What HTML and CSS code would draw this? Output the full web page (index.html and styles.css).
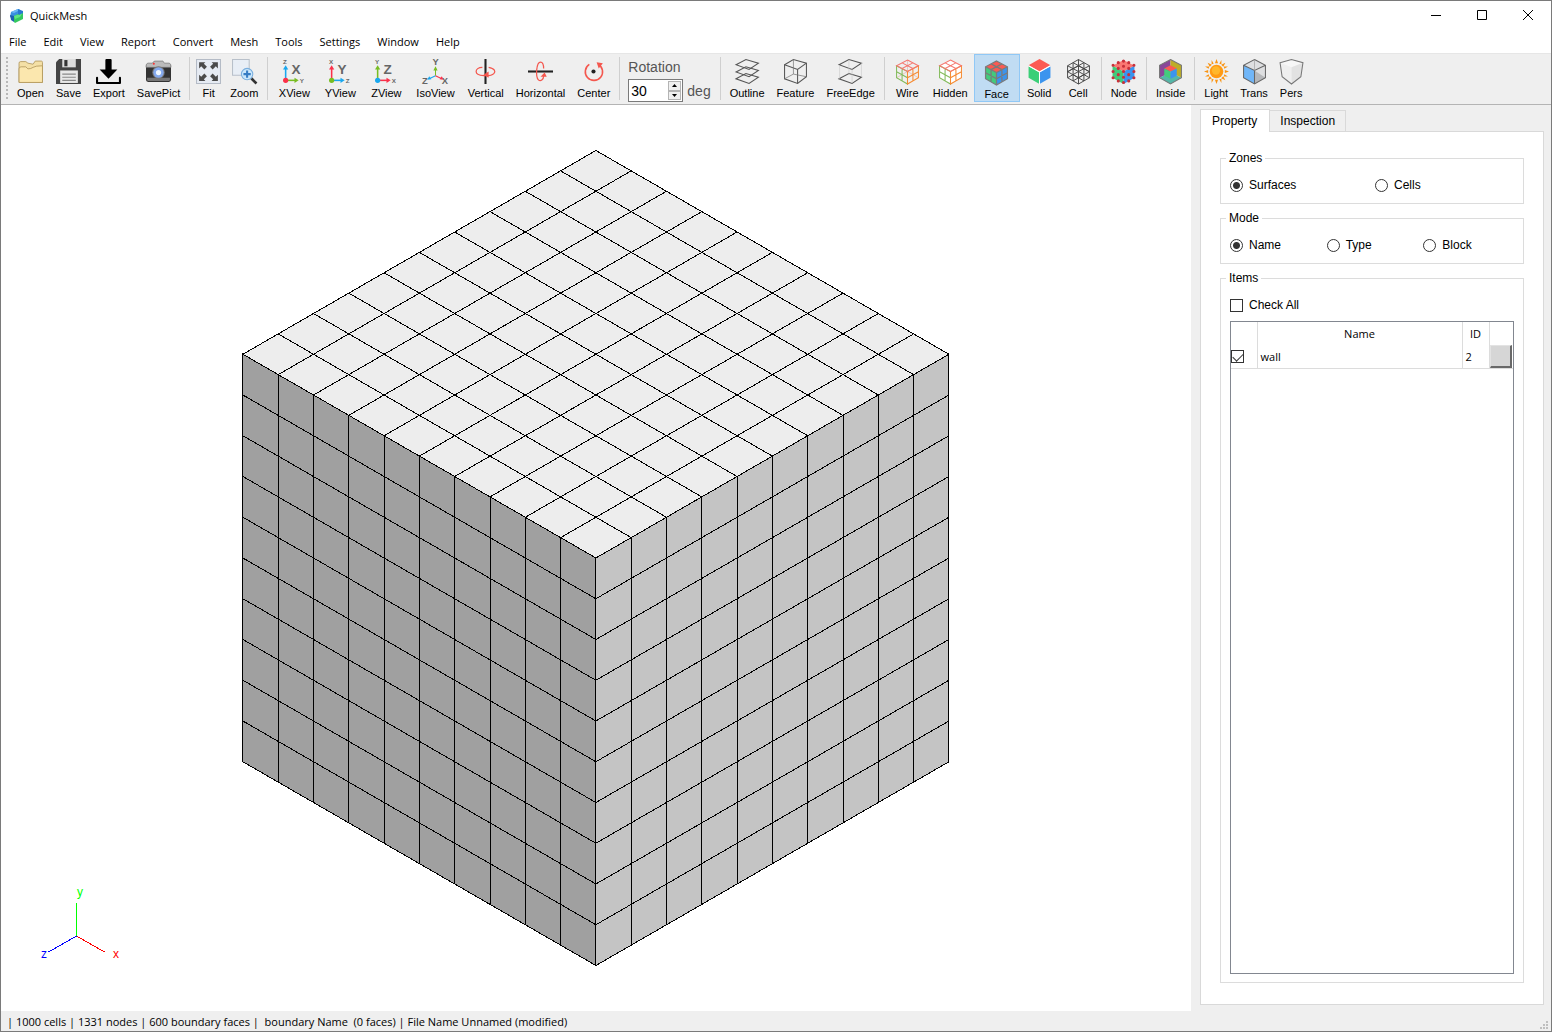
FILE: index.html
```html
<!DOCTYPE html>
<html lang="en">
<head>
  <meta charset="UTF-8">
  <meta name="viewport" content="width=device-width, initial-scale=1.0">
  <title>QuickMesh</title>
  <link rel="stylesheet" href="styles.css">
</head>
<body>
  <div class="window">
    <header class="titlebar">
      <svg class="logo" width="16" height="16" viewBox="0 0 16 16">
        <path d="M2 4l7-3 2 1v4l-7 4-3-1z" fill="#3a8fe0"/>
        <path d="M2 4l7-3 2 1-6 3z" fill="#6db8f5"/>
        <path d="M1 7l4 1v6l-3-2z" fill="#1d5fb0"/>
        <path d="M5 8l6-3 3-1v7l-8 4-1-1z" fill="#35c860"/>
        <path d="M5 8l6-2 3-2-3 5-5 2z" fill="#5fe583"/>
        <path d="M9 1l5 2v2l-4 2-1-1z" fill="#2678cf"/>
      </svg>
      <h1>QuickMesh</h1>
      <div class="controls">
        <button aria-label="Minimize"><svg width="12" height="12"><path d="M1 5.500h10" stroke="#000"/></svg></button>
        <button aria-label="Maximize"><svg width="12" height="12"><path d="M1.500 .500h9v9h-9z" fill="none" stroke="#000"/></svg></button>
        <button aria-label="Close"><svg width="12" height="12"><path d="M1 0l10 10M11 0L1 10" stroke="#000"/></svg></button>
      </div>
    </header>

    <nav class="menu">
      <button>File</button>
      <button>Edit</button>
      <button>View</button>
      <button>Report</button>
      <button>Convert</button>
      <button>Mesh</button>
      <button>Tools</button>
      <button>Settings</button>
      <button>Window</button>
      <button>Help</button>
    </nav>

    <div class="toolbar">
      <span class="grip"></span>

      <button class="tool">
        <svg viewBox="0 0 24 24"><path d="M1 22.500V4q0-1.500 1.500-1.500h5l2 1.500 5 1 2-3h6q1 0 1 1.500v19z" fill="#f4e0a6" stroke="#b1965a" stroke-width=".8"/><path d="M1 22.500V9.500q0-2 2-2h4.500l2 2q3 0 5-1.500t9-1.500v16z" fill="#fbe7ae" stroke="#b1965a" stroke-width=".8"/></svg>
        Open
      </button>
      <button class="tool">
        <svg viewBox="0 0 24 24"><path d="M3 0h21v24H0V3z" fill="#444"/><path d="M6 0h13v8H6z" fill="#ddd"/><path d="M8 1h3v6H8z" fill="#333"/><path d="M4 11h17v12H4z" fill="#e8e8e8"/><path d="M6 14.500h13M6 17.500h13M6 20.500h13" stroke="#888"/></svg>
        Save
      </button>
      <button class="tool">
        <svg viewBox="0 0 24 24"><path d="M9 1q0-1 1-1h4q1 0 1 1v9h5.500L12 19 3.500 10H9z"/><path d="M1 18v5h22v-5" fill="none" stroke="#000" stroke-width="2" stroke-linejoin="round" stroke-linecap="round"/></svg>
        Export
      </button>
      <button class="tool">
        <svg viewBox="0 0 24 24"><path d="M2 5h4l2-3h8l2 3h4q2 0 2 2v13q0 2-2 2H2q-2 0-2-2V7q0-2 2-2z" fill="#333"/><path d="M2 4h4l2-2h8l2 2h4q2 0 2 4H0q0-4 2-4z" fill="#bbb" stroke="#777" stroke-width=".7"/><path d="M1 18h22v2q0 1-1 1H2q-1 0-1-1z" fill="#777"/><circle cx="12" cy="13" r="6" fill="#777"/><circle cx="12" cy="13" r="5" fill="#84a9ed"/><circle cx="12" cy="13" r="2.500" fill="#eef6ff"/><circle cx="7.500" cy="4.500" r="1" fill="#f33"/></svg>
        SavePict
      </button>
      <span class="sep"></span>

      <button class="tool">
        <svg viewBox="0 0 24 24"><path d="M.5.500h23v23H.5z" fill="#e6ebf3" stroke="#b4bbc6"/><path d="M3 3h6L7.500 4.500l3 3-2.500 2.500-3-3L3 9zM21 3h-6l1.500 1.500-3 3L16 10l3-3 2 2zM3 21h6l-1.500-1.500 3-3L8 14l-3 3-2-2zM21 21h-6l1.500-1.500-3-3L16 14l3 3 2-2z" fill="#4a4a4a"/></svg>
        Fit
      </button>
      <button class="tool">
        <svg viewBox="0 0 24 24"><path d="M.5.500h16v15H.5z" fill="#e8eef6" stroke="#b8c0ca"/><path d="M18.500 18.500l5 5" stroke="#333" stroke-width="2.500"/><circle cx="14.500" cy="14.500" r="5.500" fill="#cbe7fb" stroke="#79aede"/><path d="M14.500 11v7M11 14.500h7" stroke="#377dc4" stroke-width="2"/></svg>
        Zoom
      </button>
      <span class="sep"></span>

      <button class="tool view">
        <svg viewBox="0 0 24 24"><path d="M3.500 20V9" stroke="#19a7ee" stroke-width="1.500"/><path d="M1 10l2.500-4L6 10z" fill="#19a7ee"/><path d="M4 20.500h9" stroke="#78bd22" stroke-width="1.500"/><path d="M12 18l4 2.500-4 2.500z" fill="#78bd22"/><circle cx="3.500" cy="20.500" r="2.500" fill="#fb3049"/><text x="1" y="5" class="axis-sm">Z</text><text x="17" y="23" class="axis-sm">Y</text><text x="9" y="14" class="axis-lg">X</text></svg>
        XView
      </button>
      <button class="tool view">
        <svg viewBox="0 0 24 24"><path d="M3.500 20V9" stroke="#fb3049" stroke-width="1.500"/><path d="M1 10l2.500-4L6 10z" fill="#fb3049"/><path d="M4 20.500h9" stroke="#19a7ee" stroke-width="1.500"/><path d="M12 18l4 2.500-4 2.500z" fill="#19a7ee"/><circle cx="3.500" cy="20.500" r="2.500" fill="#78bd22"/><text x="1" y="5" class="axis-sm">X</text><text x="17" y="23" class="axis-sm">Z</text><text x="9" y="14" class="axis-lg">Y</text></svg>
        YView
      </button>
      <button class="tool view">
        <svg viewBox="0 0 24 24"><path d="M3.500 20V9" stroke="#78bd22" stroke-width="1.500"/><path d="M1 10l2.500-4L6 10z" fill="#78bd22"/><path d="M4 20.500h9" stroke="#fb3049" stroke-width="1.500"/><path d="M12 18l4 2.500-4 2.500z" fill="#fb3049"/><circle cx="3.500" cy="20.500" r="2.500" fill="#19a7ee"/><text x="1" y="5" class="axis-sm">Y</text><text x="17" y="23" class="axis-sm">X</text><text x="9" y="14" class="axis-lg">Z</text></svg>
        ZView
      </button>
      <button class="tool view">
        <svg viewBox="0 0 24 24"><path d="M12 16V9" stroke="#78bd22"/><path d="M10 11l2-4 2 4z" fill="#78bd22"/><path d="M12 16l-6 3" stroke="#19a7ee"/><path d="M4 20l2-3.500 2 3z" fill="#19a7ee"/><path d="M12 16l6 3" stroke="#fb3049"/><path d="M20 20l-2-3.500-2 3z" fill="#fb3049"/><text x="9" y="6" class="axis-md">Y</text><text x="-1" y="24" class="axis-md">Z</text><text x="18" y="24" class="axis-md">X</text></svg>
        IsoView
      </button>
      <button class="tool">
        <svg viewBox="0 0 24 24"><path d="M12 0v24" stroke="#222" stroke-width="2"/><path d="M9 8c-4 0-6 2-6 4 0 5 14 5 17 2 2-2 1-5-5-6" fill="none" stroke="#f4574e" stroke-width="1.200"/><path d="M15 12v6l-5-3z" fill="#f4574e"/></svg>
        Vertical
      </button>
      <button class="tool">
        <svg viewBox="0 0 24 24"><path d="M0 12h24" stroke="#222" stroke-width="2"/><path d="M15 9c0-4-1-6-3-6-4 0-5 14-2 17 2 2 5 0 5-4" fill="none" stroke="#f4574e" stroke-width="1.200"/><path d="M12 17h6l-2-4z" fill="#f4574e"/></svg>
        Horizontal
      </button>
      <button class="tool">
        <svg viewBox="0 0 24 24"><path d="M16.500 5A8.300 8.300 0 1 1 8 5.200" fill="none" stroke="#f4574e" stroke-width="1.500"/><path d="M15 3l6 1-4 5z" fill="#f4574e"/><circle cx="12" cy="12" r="2" fill="#222"/></svg>
        Center
      </button>
      <span class="sep"></span>

      <div class="rotation">
        <label for="rotation">Rotation</label>
        <div class="rotation-row">
          <div class="spin">
            <input type="text" id="rotation" value="30">
            <div class="spin-buttons">
              <button aria-label="Increase"><svg width="5" height="3"><path d="M0 3l2.500-3L5 3z"/></svg></button>
              <button aria-label="Decrease"><svg width="5" height="3"><path d="M0 0l2.500 3L5 0z"/></svg></button>
            </div>
          </div>
          <span>deg</span>
        </div>
      </div>
      <span class="sep"></span>

      <button class="tool">
        <svg viewBox="0 0 24 24"><g fill="none" stroke="#555"><path d="M1 5.500l9.500-5L22.500 4 13.500 10z"/><path d="M1 12.500l9.500-5L22.500 11 13.500 17z"/><path d="M1 19l9.500-5 12 3.500-9 6z"/></g></svg>
        Outline
      </button>
      <button class="tool">
        <svg viewBox="0 0 24 24"><g fill="none" stroke="#555"><path d="M1.500 5.500L10 .500l12.500 3.500v13L14 23.500 1.500 19z"/><path d="M1.500 5.500L14 10l8.500-6M14 10v13.500"/><path d="M10 .500v14L1.500 19M10 14.500l12.500 2.500" stroke="#777" stroke-width=".7"/></g></svg>
        Feature
      </button>
      <button class="tool">
        <svg viewBox="0 0 24 24"><g fill="none" stroke="#555"><path d="M1 5.500l9.500-5L22.500 4 13.500 10z"/><path d="M1 19l9.500-5 12 3.500-9 6z"/><path d="M1.500 6v13M22.500 4v13M13.500 10v13M10.500 1v13" stroke="#ccc" stroke-width=".6"/></g></svg>
        FreeEdge
      </button>
      <span class="sep"></span>

      <button class="tool toggle">
        <svg viewBox="0 0 24 24"><g fill="none"><path d="M12 12V1M12 12l10.500 6M12 12l-10.500 6" stroke="#e5b6ac" stroke-width=".7"/><path d="M1.500 6.500L12 12v12L1.500 18zM6.800 9.200V21M1.500 12.200L12 18" stroke="#83bb5b"/><path d="M22.500 6.500L12 12v12l10.500-6zM17.200 9.200V21M22.500 12.200L12 18" stroke="#f68b32"/><path d="M12 1l10.500 5.500L12 12 1.500 6.500zM17.200 3.700L6.800 9.200M6.800 3.700l10.400 5.500" stroke="#f5776f"/></g></svg>
        Wire
      </button>
      <button class="tool">
        <svg viewBox="0 0 24 24"><path d="M12 1l10.500 5.500V18L12 24 1.500 18V6.500z" fill="#fff"/><g fill="none"><path d="M1.500 6.500L12 12v12L1.500 18zM6.800 9.200V21M1.500 12.200L12 18" stroke="#83bb5b"/><path d="M22.500 6.500L12 12v12l10.500-6zM17.200 9.200V21M22.500 12.200L12 18" stroke="#f68b32"/><path d="M12 1l10.500 5.500L12 12 1.500 6.500zM17.200 3.700L6.800 9.200M6.800 3.700l10.400 5.500" stroke="#f5776f"/></g></svg>
        Hidden
      </button>
      <button class="tool active" aria-pressed="true">
        <svg viewBox="0 0 24 24"><path d="M12 1l10.500 5.500L12 12 1.500 6.500z" fill="#fc5a53"/><path d="M1.500 6.500L12 12v12L1.500 18z" fill="#43cb7c"/><path d="M22.500 6.500L12 12v12l10.500-6z" fill="#3b94ee"/><path d="M12 1l10.500 5.500V18L12 24 1.500 18V6.500zM1.500 6.500L12 12l10.500-5.500M12 12v12M6.800 9.200V21M1.500 12.200L12 18l10.500-5.800M17.200 9.200V21M17.200 3.700L6.800 9.200M6.800 3.700l10.400 5.500" fill="none" stroke="#7b7b7b" stroke-width="1.200"/></svg>
        Face
      </button>
      <button class="tool toggle">
        <svg viewBox="0 0 24 24"><path d="M12 0l10.500 6L12 12 1.500 6z" fill="#fc5a53"/><path d="M1.500 7L12 13v11L1.500 18z" fill="#3bcf77"/><path d="M22.500 7L12 13v11l10.500-6z" fill="#3b94ee"/><path d="M1.500 6.500L12 12.500l10.500-6M12 12.500V24" fill="none" stroke="#fff"/></svg>
        Solid
      </button>
      <button class="tool toggle">
        <svg viewBox="0 0 24 24"><path d="M12 .500l10.500 6V18L12 24 1.500 18V6.500zM1.500 6.500L12 12l10.500-5.500M12 .500V24M6.800 3.500V21M1.500 12.200L12 18l10.500-5.800M17.200 3.500V21M17.200 3.500L1.500 12.200M6.800 3.500l15.700 8.700M1.500 18L12 12l10.500 6M1.500 12.200L12 6.500l10.500 5.700M6.800 21l10.400-6M17.200 21l-10.400-6" fill="none" stroke="#444" stroke-width=".9"/></svg>
        Cell
      </button>
      <span class="sep"></span>

      <button class="tool">
        <svg viewBox="0 0 24 24"><path d="M12 1l10.500 5.500L12 12 1.500 6.500z" fill="#fb7772"/><path d="M1.500 6.500L12 12v12L1.500 18z" fill="#43cb7c"/><path d="M22.500 6.500L12 12v12l10.500-6z" fill="#3b94ee"/><path d="M12 2h0M2 6h0M22 6h0M7 3.500h0M17 3.500h0M12 7h0M7 9h0M17 9h0M12 12h0M2 12h0M22 12h0M2 18h0M22 18h0M7 15h0M17 15h0M12 17.500h0M7 21h0M17 21h0M12 22.500h0" stroke="#c9303a" stroke-width="3" stroke-linecap="round"/></svg>
        Node
      </button>
      <span class="sep"></span>

      <button class="tool">
        <svg viewBox="0 0 24 24"><path d="M1.500 6L12 .500V13L1.500 18z" fill="#8a4799"/><path d="M22.500 6L12 .500V13l10.500 5z" fill="#bdad27"/><path d="M1.500 18L12 13l10.500 5L12 24z" fill="#54b7a8"/><path d="M12 .500L22.500 6v12L12 24 1.500 18V6z" fill="none" stroke="#777"/><path d="M12 6l6 3-6 3-6-3z" fill="#fc5a53"/><path d="M6 9l6 3v7l-6-3z" fill="#43cb7c"/><path d="M18 9l-6 3v7l6-3z" fill="#3b94ee"/></svg>
        Inside
      </button>
      <span class="sep"></span>

      <button class="tool">
        <svg viewBox="0 0 24 24"><path d="M12 0l1.500 4h-3zM12 24l1.500-4h-3zM0 12l4-1.500v3zM24 12l-4-1.500v3zM3.500 3.500l4 2-2 2zM20.500 3.500l-4 2 2 2zM3.500 20.500l4-2-2-2zM20.500 20.500l-4-2 2-2zM7.300 1l2 3.500-2 .5zM16.700 1l-2 3.500 2 .5zM7.300 23l2-3.500-2-.5zM16.700 23l-2-3.500 2-.5zM1 7.300l3.500 2 .5-2zM1 16.700l3.500-2 .5 2zM23 7.300l-3.500 2-.5-2zM23 16.700l-3.500-2-.5 2z" fill="#f99412"/><circle cx="12" cy="12" r="6.500" fill="#ff9a13"/><circle cx="11.500" cy="11" r="4" fill="#ffb72b"/></svg>
        Light
      </button>
      <button class="tool">
        <svg viewBox="0 0 24 24"><path d="M12 .500l10.500 5.500v12L12 24 1.500 18V6z" fill="#dedfe1"/><path d="M1.500 6L12 11v13L1.500 18z" fill="#70b6f8"/><path d="M12 11v13l10.500-6z" fill="#b5b7ba"/><path d="M12 .500l10.500 5.500v12L12 24 1.500 18V6zM1.500 6L12 11l10.500-5M12 11v13" fill="none" stroke="#666"/><path d="M12 .500V11" stroke="#999" stroke-width=".6"/></svg>
        Trans
      </button>
      <button class="tool">
        <svg viewBox="0 0 24 24"><path d="M1 3.500L12 .500l11 3-2 13.500-9 7-9-7z" fill="#f7f7f7"/><path d="M1 3.500L12 8v16l-9-7z" fill="#efefef"/><path d="M23 3.500L12 8v16l9-7z" fill="#e2e2e2"/><path d="M1 3.500L12 .500l11 3-2 13.500-9 7-9-7z" fill="none" stroke="#777"/></svg>
        Pers
      </button>
    </div>

    <main class="workspace">
      <section class="viewport">
        <svg viewBox="0 0 1190 906" preserveAspectRatio="xMidYMid meet" shape-rendering="crispEdges">
          <g id="mesh"></g>
          <path d="M75.500 831v-33" stroke="#0f0"/>
          <path d="M75.500 831l28 16" stroke="#f00"/>
          <path d="M75.500 831l-28 16" stroke="#00f"/>
          <text x="76" y="791" fill="#0f0">y</text>
          <text x="112" y="853" fill="#f00">x</text>
          <text x="40" y="853" fill="#00f">z</text>
        </svg>
      </section>

      <aside class="side">
        <div class="tabs" role="tablist">
          <button class="tab selected" role="tab" aria-selected="true">Property</button>
          <button class="tab" role="tab" aria-selected="false">Inspection</button>
        </div>
        <div class="panel">
          <fieldset>
            <legend>Zones</legend>
            <div class="options">
              <label><input type="radio" name="zones" checked>Surfaces</label>
              <label><input type="radio" name="zones">Cells</label>
            </div>
          </fieldset>
          <fieldset>
            <legend>Mode</legend>
            <div class="options">
              <label><input type="radio" name="mode" checked>Name</label>
              <label><input type="radio" name="mode">Type</label>
              <label><input type="radio" name="mode">Block</label>
            </div>
          </fieldset>
          <fieldset class="items">
            <legend>Items</legend>
            <label class="check-all"><input type="checkbox">Check All</label>
            <div class="list">
              <table>
                <thead>
                  <tr><th class="col-check"></th><th>Name</th><th class="col-id">ID</th><th class="col-color"></th></tr>
                </thead>
                <tbody>
                  <tr>
                    <td class="col-check"><input type="checkbox" aria-label="wall" checked></td>
                    <td>wall</td>
                    <td>2</td>
                    <td class="col-color"><button class="swatch" aria-label="Color"></button></td>
                  </tr>
                </tbody>
              </table>
            </div>
          </fieldset>
        </div>
      </aside>
    </main>

    <footer class="status">
      <span>| 1000 cells | 1331 nodes | 600 boundary faces |&nbsp; boundary Name&nbsp; (0 faces) | File Name Unnamed (modified)</span>
      <svg width="8" height="8"><path d="M6 0h2v2H6zM3 3h2v2H3zM6 3h2v2H6zM0 6h2v2H0zM3 6h2v2H3zM6 6h2v2H6z" fill="#bfbfbf"/></svg>
    </footer>
  </div>
  <script src="mesh.js"></script>
</body>
</html>
```
FILE: styles.css
```css
* {
  box-sizing: border-box;
  margin: 0;
  padding: 0;
}

body {
  font-family: "Liberation Sans", Arial, sans-serif;
  font-size: 12px;
  color: #000;
}

button {
  font: inherit;
  color: inherit;
  background: none;
  border: none;
}

.window {
  display: flex;
  flex-direction: column;
  height: 100vh;
  border: 1px solid #7a7a7a;
  background: #fff;
}

.titlebar,
.menu,
.status,
.list {
  font-family: "Open Sans", "Noto Sans", sans-serif;
  font-size: 11px;
}

/* title bar */
.titlebar {
  display: flex;
  align-items: center;
  height: 29px;
  padding-left: 8px;
}

.titlebar h1 {
  flex: 1;
  margin-left: 5px;
  font-size: 11px;
  font-weight: normal;
}

.controls {
  display: flex;
}

.controls button {
  display: flex;
  align-items: center;
  justify-content: center;
  width: 46px;
  height: 28px;
}

/* menu */
.menu {
  display: flex;
  gap: 1px;
  height: 23px;
}

.menu button {
  padding: 0 8px;
}

/* toolbar */
.toolbar {
  display: flex;
  height: 52px;
  padding: 0 0 2px 5px;
  background: #efefef;
  border-top: 1px solid #e6e6e6;
  border-bottom: 1px solid #b4b4b4;
}

.grip {
  width: 2px;
  margin: 3px 3px 2px 0;
  background: repeating-linear-gradient(#b8b8b8 0 2px, transparent 2px 4px);
}

.tool {
  display: flex;
  flex-direction: column;
  align-items: center;
  gap: 3px;
  min-width: 31px;
  padding: 5px 6px 0;
  font-size: 11px;
  line-height: 12px;
}

.tool svg {
  width: 25px;
  height: 25px;
  margin: 0 -4px;
  overflow: visible;
}

.view {
  min-width: 46px;
  padding: 5px 7px 0;
}

.toggle {
  min-width: 39px;
}

.active {
  min-width: 46px;
  background: #c0dcf3;
  border: 1px solid #90c8f6;
}

.sep {
  width: 1px;
  margin: 3px 3px 2px;
  background: #cfcfcf;
}

.axis-sm,
.axis-md,
.axis-lg {
  font-weight: bold;
  fill: #666;
}

.axis-sm {
  font-size: 6px;
}

.axis-md {
  font-size: 9px;
}

.axis-lg {
  font-size: 13px;
}

.rotation {
  padding: 3px 6px 0 5px;
  font-size: 14px;
  line-height: 20px;
  color: #555;
}

.rotation label {
  display: block;
}

.rotation-row {
  display: flex;
  align-items: center;
  gap: 4px;
  margin-top: 2px;
}

.spin {
  display: flex;
  width: 55px;
  height: 23px;
  border: 1px solid #7a7a7a;
  background: #fff;
}

.spin input {
  flex: 1;
  width: 0;
  padding-left: 2px;
  border: none;
  outline: none;
  font: inherit;
  color: #000;
}

.spin-buttons {
  display: flex;
  flex-direction: column;
  width: 15px;
  padding: 1px;
}

.spin-buttons button {
  display: flex;
  flex: 1;
  align-items: center;
  justify-content: center;
  border: 1px solid #b4b4b4;
  background: #f0f0f0;
}

/* drawing area and side panel */
.workspace {
  display: flex;
  flex: 1;
  min-height: 0;
}

.viewport {
  flex: 1;
  min-width: 0;
}

.viewport svg {
  display: block;
  width: 100%;
  height: 100%;
}

.viewport text {
  font-size: 12px;
}

.face {
  stroke: #000;
}

.mesh-line {
  fill: none;
  stroke: #000;
}

.side {
  display: flex;
  flex-direction: column;
  width: 360px;
  padding: 4px 7px 6px 9px;
  background: #efefef;
}

.tabs {
  display: flex;
  align-items: flex-end;
}

.tab {
  height: 21px;
  padding: 0 10px;
  border: 1px solid #d9d9d9;
  border-width: 1px 1px 0 0;
}

.tab.selected {
  position: relative;
  height: 23px;
  margin-bottom: -1px;
  padding: 0 12px 0 11px;
  border-left-width: 1px;
  background: #fff;
}

.panel {
  display: flex;
  flex: 1;
  flex-direction: column;
  gap: 7px;
  padding: 19px 19px 21px;
  border: 1px solid #d9d9d9;
  background: #fff;
}

fieldset {
  padding: 13px 9px 11px;
  border: 1px solid #dcdcdc;
  min-width: 0;
}

legend {
  margin-left: -4px;
  padding: 0 3px;
  line-height: 15px;
}

.options {
  display: flex;
  margin-right: -6px;
}

.options label {
  flex: 1;
}

.options label,
.check-all {
  display: flex;
  align-items: center;
  gap: 6px;
  line-height: 13px;
}

input[type="radio"],
input[type="checkbox"] {
  appearance: none;
  width: 13px;
  height: 13px;
  border: 1px solid #333;
  background: #fff;
}

input[type="radio"] {
  border-radius: 50%;
}

input[type="radio"]:checked {
  background: radial-gradient(circle, #333 3px, #fff 4px);
}

input[type="checkbox"]:checked::before {
  content: "";
  display: block;
  width: 9px;
  height: 5px;
  margin: 2px 1px;
  border: solid #333;
  border-width: 0 0 1px 1px;
  transform: rotate(-45deg);
}

.items {
  display: flex;
  flex: 1;
  flex-direction: column;
  gap: 9px;
  padding-bottom: 8px;
}

.list {
  flex: 1;
  border: 1px solid #828790;
}

table {
  width: 100%;
  table-layout: fixed;
  border-collapse: collapse;
}

th,
td {
  height: 23px;
  border-right: 1px solid #dcdcdc;
  font-weight: normal;
}

th:last-child,
td:last-child {
  border-right: none;
}

td {
  padding-left: 3px;
  border-bottom: 1px solid #dcdcdc;
}

td.col-check,
td.col-color {
  padding: 0;
}

.col-check {
  width: 26px;
}

.col-check input {
  display: block;
}

.col-id {
  width: 27px;
}

.col-color {
  width: 24px;
}

.swatch {
  display: block;
  width: 22px;
  height: 23px;
  border: 1px solid #e3e3e3;
  border-right: 2px solid #696969;
  border-bottom: 2px solid #696969;
  background: #d6d6d6;
}

/* status bar */
.status {
  display: flex;
  align-items: center;
  justify-content: space-between;
  height: 20px;
  padding: 0 3px 0 6px;
  background: #efefef;
}

.status svg {
  align-self: flex-end;
  margin-bottom: 2px;
}
```
FILE: mesh.js
```js
// Isometric box: each face is an origin plus two edge vectors, split in N x N
const N = 10;
const W = 353, H = 203.75, D = 407.5;
const center = [594.9, 453];

const faces = [
  { o: center, u: [W, -H], v: [-W, -H], fill: '#ededed' },
  { o: center, u: [-W, -H], v: [0, D], fill: '#a0a0a0' },
  { o: center, u: [W, -H], v: [0, D], fill: '#c4c4c4' }
];

const mesh = document.getElementById('mesh');

function at(f, a, b) {
  return (f.o[0] + f.u[0] * a + f.v[0] * b) + ' ' + (f.o[1] + f.u[1] * a + f.v[1] * b);
}

function addPath(d, cls, fill) {
  const p = document.createElementNS('http://www.w3.org/2000/svg', 'path');
  p.setAttribute('d', d);
  p.setAttribute('class', cls);
  if (fill) p.setAttribute('fill', fill);
  mesh.appendChild(p);
}

faces.forEach(f => {
  addPath(`M${at(f, 0, 0)}L${at(f, 1, 0)}L${at(f, 1, 1)}L${at(f, 0, 1)}Z`, 'face', f.fill);
  let d = '';
  for (let i = 1; i < N; i++) {
    d += `M${at(f, i / N, 0)}L${at(f, i / N, 1)}M${at(f, 0, i / N)}L${at(f, 1, i / N)}`;
  }
  addPath(d, 'mesh-line');
});
```
